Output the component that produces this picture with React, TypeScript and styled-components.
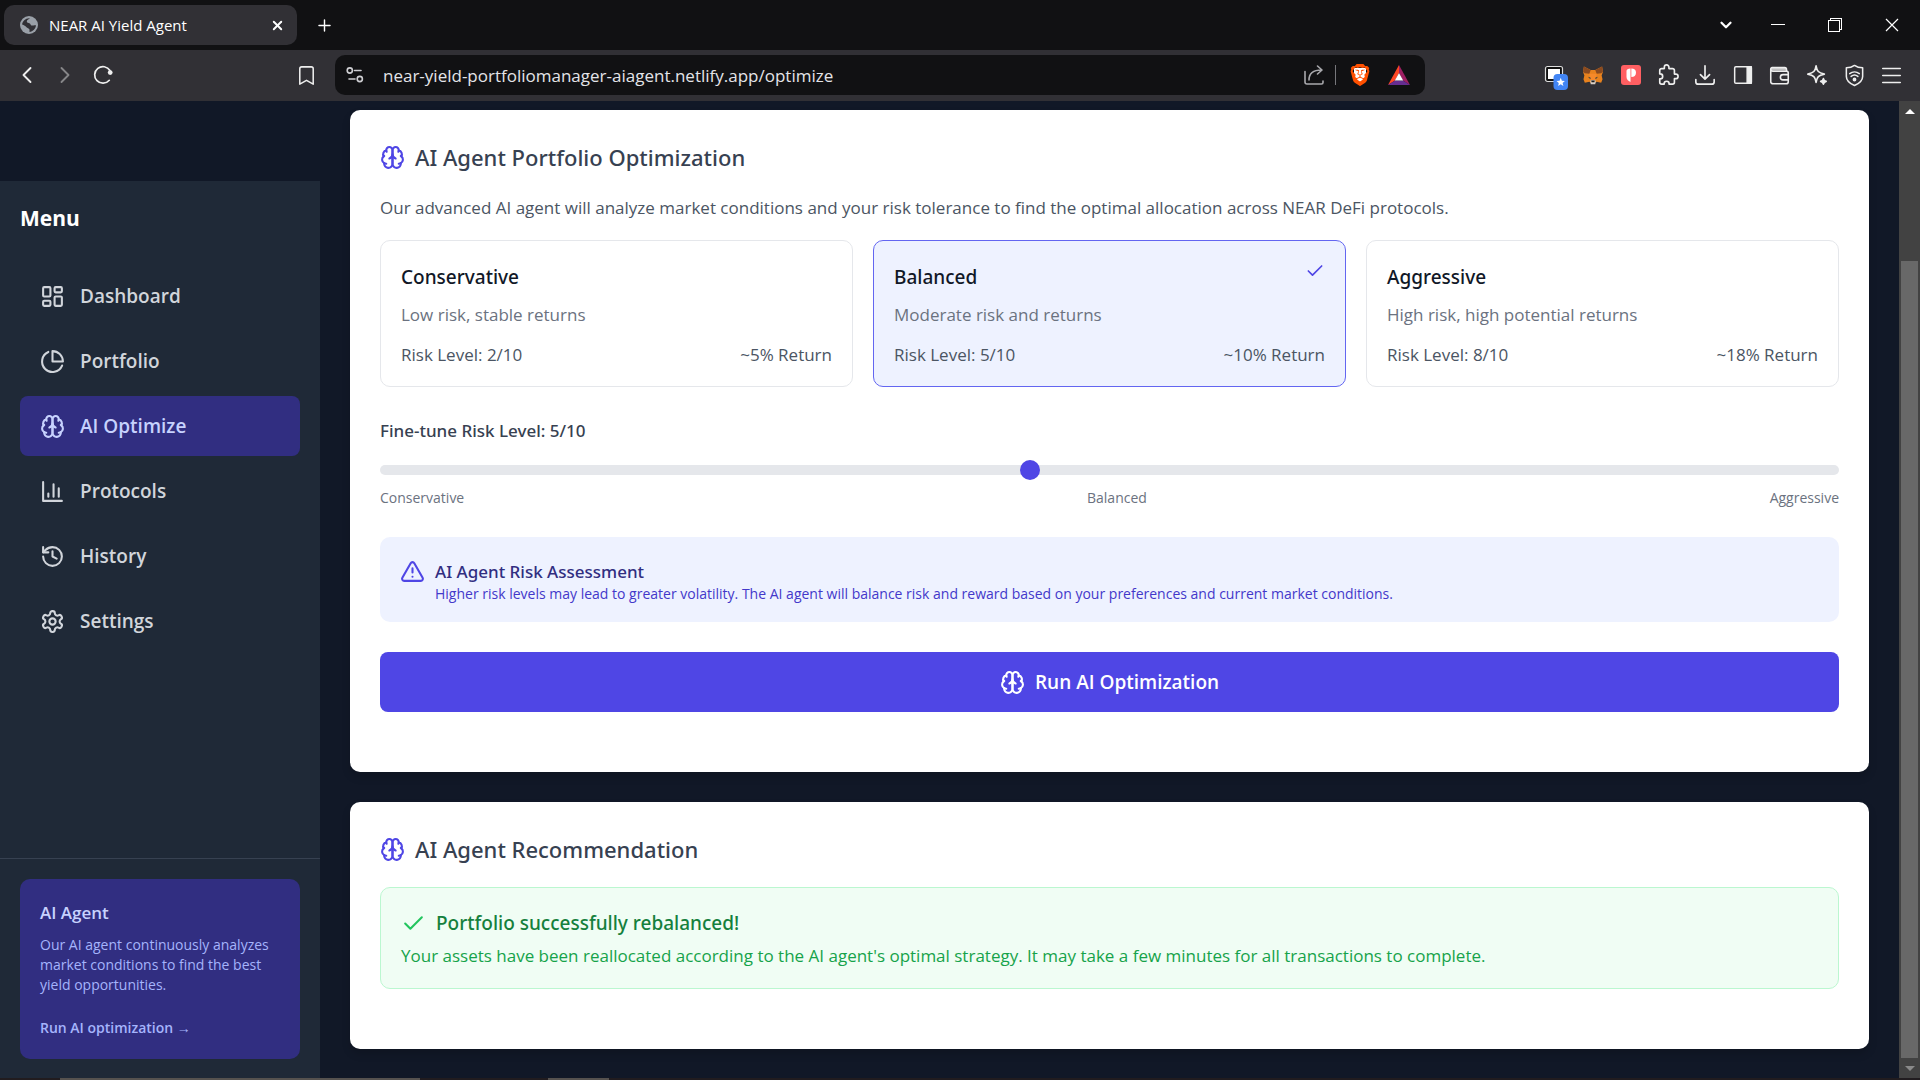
import React, { useState } from "react";
import styled, { createGlobalStyle, css } from "styled-components";
import {
  ChevronLeft, ChevronRight, ChevronDown, Bookmark, Plus, X,
  History, LayoutDashboard, Check,
} from "lucide-react";
import { SiBrave } from "react-icons/si";

const regular = `"Open Sans", "Noto Sans", sans-serif`;
const medium = `"Noto Sans", "Open Sans", sans-serif`;

const GlobalStyle = createGlobalStyle`
  *, *::before, *::after { box-sizing: border-box; }
  body { margin: 0; background: #111827; font-family: ${regular}; font-size: 17px; line-height: 25px; }
  h1, h2, h3, p, ul { margin: 0; padding: 0; }
  button { font: inherit; color: inherit; background: none; border: 0; padding: 0; cursor: pointer; }
  a { color: inherit; text-decoration: none; }
  svg { display: block; flex: none; }
`;

const mediumText = css`
  font-family: ${medium};
  font-weight: 500;
`;

/* ---------- browser frame ---------- */

const Window = styled.div`
  min-height: 100vh;
  display: flex;
  flex-direction: column;
`;

const TabStrip = styled.div`
  height: 50px;
  background: #111113;
  display: flex;
  align-items: center;
  padding-left: 4px;
  color: #fff;
`;

const Tab = styled.div`
  width: 293px;
  height: 40px;
  border-radius: 10px;
  background: #313035;
  display: flex;
  align-items: center;
  gap: 11px;
  padding: 0 12px 0 16px;
  font-size: 15px;
  line-height: 20px;
`;

const TabTitle = styled.span`
  flex: 1;
`;

const IconButton = styled.button<{ $w?: number; $dim?: boolean }>`
  width: ${(p) => p.$w ?? 26}px;
  height: 30px;
  display: flex;
  align-items: center;
  justify-content: center;
  opacity: ${(p) => (p.$dim ? 0.45 : 1)};
`;

const NewTab = styled(IconButton)`
  margin-left: 14px;
`;

const WindowControls = styled.div`
  margin-left: auto;
  display: flex;
`;

const Toolbar = styled.div`
  height: 51px;
  background: #313035;
  color: #eee;
  display: flex;
  align-items: center;
  padding: 0 16px 1px 0;
`;

const NavGroup = styled.div`
  flex: 0 0 335px;
  display: flex;
  gap: 12px;
  padding: 0 16px 0 14px;
`;

const BookmarkButton = styled(IconButton)`
  margin-left: auto;
`;

const AddressBar = styled.div`
  flex: 1;
  height: 40px;
  margin-right: 119px;
  border-radius: 10px;
  background: #111113;
  display: flex;
  align-items: center;
  padding-left: 7px;
`;

const Address = styled.input`
  flex: 1;
  min-width: 0;
  margin-left: 15px;
  padding: 0;
  border: 0;
  outline: 0;
  background: none;
  color: #e4e4e8;
  font: 400 17px ${regular};
`;

const AddressDivider = styled.span`
  width: 1px;
  height: 20px;
  margin: 0 11px 0 8px;
  background: #77777b;
`;

const BraveMark = styled.span`
  display: flex;
  color: #ff5000;
  background: linear-gradient(#fff, #fff) center / 12px 14px no-repeat;
`;

const Extensions = styled.div`
  width: 360px;
  display: flex;
  justify-content: space-between;
`;

const Viewport = styled.div`
  flex: 1;
  display: flex;
  align-items: stretch;
`;

const ScrollBar = styled.div`
  flex: 0 0 21px;
  display: flex;
  flex-direction: column;
  align-items: center;
  background: #424242;
`;

const ScrollArrow = styled.span<{ $down?: boolean }>`
  height: 20px;
  display: flex;
  align-items: center;
  color: ${(p) => (p.$down ? "#8a8a8a" : "#fff")};
`;

const ScrollThumb = styled.span`
  flex: 1;
  width: 17px;
  margin-top: 140px;
  background: #686868;
`;

const Taskbar = styled.div`
  height: 2px;
  display: flex;
  background: #211c1f;
`;

const TaskbarItem = styled.span<{ $start: number; $w: number }>`
  width: ${(p) => p.$w}px;
  margin-left: ${(p) => p.$start}px;
  background: #56524f;
`;

/* ---------- sidebar ---------- */

const Sidebar = styled.aside`
  flex: 0 0 320px;
  margin-top: 80px;
  background: #1f2937;
  display: flex;
  flex-direction: column;
`;

const SidebarTop = styled.div`
  flex: 1;
  padding: 20px;
`;

const MenuTitle = styled.h2`
  font-size: 21px;
  font-weight: 700;
  line-height: 35px;
  color: #fff;
`;

const NavList = styled.ul`
  list-style: none;
  margin-top: 30px;
  display: flex;
  flex-direction: column;
  gap: 5px;
`;

const NavLink = styled.a<{ $active?: boolean }>`
  height: 60px;
  padding: 0 20px;
  border-radius: 8px;
  display: flex;
  align-items: center;
  gap: 15px;
  font-size: 19px;
  font-weight: 600;
  color: ${(p) => (p.$active ? "#c7d2fe" : "#d1d5db")};
  background: ${(p) => (p.$active ? "#312e81" : "transparent")};
`;

const SidebarBottom = styled.div`
  border-top: 1px solid #374151;
  padding: 20px 20px 19px;
`;

const AgentCard = styled.section`
  padding: 21px 20px 19px;
  border-radius: 10px;
  background: #312e81;
  color: #a5b4fc;
`;

const AgentTitle = styled.h3`
  font-size: 17px;
  font-weight: 600;
  line-height: 25px;
  color: #c7d2fe;
`;

const AgentText = styled.p`
  margin-top: 10px;
  font-size: 14px;
  line-height: 20px;
`;

const AgentLink = styled.a`
  display: block;
  margin-top: 20px;
  font-size: 14px;
  font-weight: 600;
`;

/* ---------- page ---------- */

const Main = styled.main`
  flex: 1;
  min-width: 0;
  padding: 9px 30px 29px;
  display: flex;
  flex-direction: column;
  gap: 30px;
`;

const Card = styled.section`
  padding: 30px 30px 60px;
  border-radius: 10px;
  background: #fff;
  color: #4b5563;
  box-shadow: 0 5px 8px rgba(0, 0, 0, 0.15);
`;

const CardTitle = styled.h1`
  ${mediumText}
  display: flex;
  align-items: center;
  gap: 10px;
  margin-bottom: 20px;
  font-size: 22px;
  line-height: 35px;
  color: #374151;

  svg { color: #4f46e5; }
`;

const OptionGrid = styled.div`
  display: grid;
  grid-template-columns: repeat(3, 1fr);
  gap: 20px;
  margin-top: 20px;
`;

const Option = styled.button<{ $selected: boolean }>`
  position: relative;
  padding: 21px 20px 19px;
  border: 1px solid ${(p) => (p.$selected ? "#6366f1" : "#e5e7eb")};
  border-radius: 10px;
  background: ${(p) => (p.$selected ? "#eef2ff" : "#fff")};
  text-align: left;
`;

const OptionTitle = styled.span`
  ${mediumText}
  display: block;
  font-size: 19px;
  line-height: 30px;
  color: #111827;
`;

const OptionText = styled.span`
  display: block;
  margin: 10px 0 15px;
  color: #6b7280;
`;

const OptionFacts = styled.span`
  display: flex;
  justify-content: space-between;
`;

const OptionCheck = styled(Check)`
  position: absolute;
  top: 20px;
  right: 20px;
  color: #4f46e5;
`;

const SliderLabel = styled.label`
  ${mediumText}
  display: block;
  margin-top: 31px;
  font-size: 17px;
  color: #374151;
`;

const Slider = styled.input`
  appearance: none;
  display: block;
  width: 100%;
  height: 20px;
  margin: 17px 0 8px;
  background: transparent;

  &::-webkit-slider-runnable-track {
    height: 10px;
    border-radius: 5px;
    background: #e5e7eb;
  }
  &::-webkit-slider-thumb {
    appearance: none;
    width: 20px;
    height: 20px;
    margin-top: -5px;
    border-radius: 50%;
    background: #4f46e5;
  }
`;

const SliderScale = styled.div`
  display: flex;
  justify-content: space-between;
  font-size: 14px;
  line-height: 20px;
  color: #6b7280;
`;

const Notice = styled.div`
  display: flex;
  align-items: flex-start;
  gap: 10px;
  margin: 29px 0 30px;
  padding: 22px 20px 18px;
  border-radius: 10px;
  background: #eef2ff;
  color: #4f46e5;
`;

const NoticeTitle = styled.h3`
  ${mediumText}
  font-size: 17px;
  line-height: 25px;
  color: #312e81;
`;

const NoticeText = styled.p`
  font-size: 14px;
  line-height: 20px;
  color: #4338ca;
`;

const RunButton = styled.button`
  display: flex;
  align-items: center;
  justify-content: center;
  gap: 10px;
  width: 100%;
  height: 60px;
  border-radius: 8px;
  background: #4f46e5;
  color: #fff;
  font-size: 19px;
  font-weight: 600;
`;

const Success = styled.div`
  padding: 20px;
  border: 1px solid #bbf7d0;
  border-radius: 10px;
  background: #f0fdf4;
  color: #16a34a;
`;

const SuccessTitle = styled.h2`
  ${mediumText}
  display: flex;
  align-items: center;
  gap: 10px;
  margin-bottom: 5px;
  font-size: 19px;
  line-height: 30px;
  color: #15803d;

  svg { color: #22c55e; }
`;

/* ---------- drawings ---------- */

type IconProps = { size?: number; width?: number; children: React.ReactNode };

const Line = ({ size = 25, width = 2, children }: IconProps) => (
  <svg width={size} height={size} viewBox="0 0 24 24" fill="none" stroke="currentColor"
    strokeWidth={width} strokeLinecap="round" strokeLinejoin="round" aria-hidden="true">
    {children}
  </svg>
);

const Brain = () => (
  <Line>
    <path d="M12 5a3 3 0 1 0-5.997.125 4 4 0 0 0-2.526 5.77 4 4 0 0 0 .556 6.588A4 4 0 1 0 12 18Z" />
    <path d="M12 5a3 3 0 1 1 5.997.125 4 4 0 0 1 2.526 5.77 4 4 0 0 1-.556 6.588A4 4 0 1 1 12 18Z" />
    <path d="M15 13a4.5 4.5 0 0 1-3-4 4.5 4.5 0 0 1-3 4" />
    <path d="M17.599 6.5a3 3 0 0 0 .399-1.375M6.003 5.125A3 3 0 0 0 6.401 6.5M3.477 10.896a4 4 0 0 1 .585-.396M19.938 10.5a4 4 0 0 1 .585.396M6 18a4 4 0 0 1-1.967-.516M19.967 17.484A4 4 0 0 1 18 18" />
  </Line>
);

const Pie = () => (
  <Line>
    <path d="M21.21 15.89A10 10 0 1 1 8 2.83" />
    <path d="M22 12A10 10 0 0 0 12 2v10z" />
  </Line>
);

const Bars = () => (
  <Line>
    <path d="M3 3v18h18M18 17V9M13 17V5M8 17v-3" />
  </Line>
);

const Gear = () => (
  <Line>
    <path d="M12.22 2h-.44a2 2 0 0 0-2 2v.18a2 2 0 0 1-1 1.73l-.43.25a2 2 0 0 1-2 0l-.15-.08a2 2 0 0 0-2.73.73l-.22.38a2 2 0 0 0 .73 2.73l.15.1a2 2 0 0 1 1 1.72v.51a2 2 0 0 1-1 1.74l-.15.09a2 2 0 0 0-.73 2.73l.22.38a2 2 0 0 0 2.73.73l.15-.08a2 2 0 0 1 2 0l.43.25a2 2 0 0 1 1 1.73V20a2 2 0 0 0 2 2h.44a2 2 0 0 0 2-2v-.18a2 2 0 0 1 1-1.73l.43-.25a2 2 0 0 1 2 0l.15.08a2 2 0 0 0 2.73-.73l.22-.39a2 2 0 0 0-.73-2.73l-.15-.08a2 2 0 0 1-1-1.74v-.5a2 2 0 0 1 1-1.74l.15-.09a2 2 0 0 0 .73-2.73l-.22-.38a2 2 0 0 0-2.73-.73l-.15.08a2 2 0 0 1-2 0l-.43-.25a2 2 0 0 1-1-1.73V4a2 2 0 0 0-2-2z" />
    <circle cx="12" cy="12" r="3" />
  </Line>
);

const Warning = () => (
  <Line>
    <path d="m21.73 18-8-14a2 2 0 0 0-3.48 0l-8 14A2 2 0 0 0 4 21h16a2 2 0 0 0 1.73-3Z" />
    <path d="M12 9v4M12 17h.01" />
  </Line>
);

const Globe = () => (
  <svg width="18" height="18" viewBox="0 0 18 18" aria-hidden="true">
    <circle cx="9" cy="9" r="9" fill="#9aa0a8" />
    <path d="M10 2.2c-1.400 1-3.200 1.800-3.200 3.300 0 2 3.600 1 3.800 3 .1 1.400 1.600 1.100 2.900.9.900-.1 1.900-.4 2.500-.1-.3 3.500-3 6.400-6.500 6.600V13.700c-.100-1.400-1.700-1.500-2.700-2.300C5.600 10.400 4 9 2.100 8.600 2.400 5 5.800 1.700 10 2.200Z" fill="#313035" />
    <path d="M7.500 5.500c1.500-.6 3.600-.4 4.600.9" stroke="#9aa0a8" strokeWidth="1.500" fill="none" />
  </svg>
);

const Reload = () => (
  <svg width="20" height="20" viewBox="0 0 20 20" fill="none" stroke="currentColor" strokeWidth="1.700" strokeLinecap="round" aria-hidden="true">
    <path d="M16.300 15.300A8.300 8.300 0 1 1 17 5.500" />
    <circle cx="17.200" cy="7.600" r="2.400" fill="currentColor" stroke="none" />
  </svg>
);

const Tune = () => (
  <svg width="18" height="18" viewBox="0 0 18 18" fill="none" stroke="#cfcfd3" strokeWidth="1.600" strokeLinecap="round" aria-hidden="true">
    <circle cx="3.800" cy="4.500" r="2.600" /><path d="M8.500 4.500H15" />
    <circle cx="13.800" cy="13" r="2.600" /><path d="M3 13h6" />
  </svg>
);

const Share = () => (
  <svg width="22" height="22" viewBox="0 0 22 22" fill="none" stroke="#a9a9ad" strokeWidth="1.600" strokeLinecap="round" strokeLinejoin="round" aria-hidden="true">
    <path d="M2 7.500V18a2 2 0 0 0 2 2h14.500a1.500 1.500 0 0 0 1.500-1.500V17" />
    <path d="M6 16c0-6 3.500-10 12.500-10M14.500 2l4.500 4-4.500 4" />
  </svg>
);

const Bat = () => (
  <svg width="22" height="20" viewBox="0 0 22 20" aria-hidden="true">
    <path d="M11 0 0 20l7-4.500L11 8Z" fill="#ff4724" />
    <path d="M11 0l11 20-7-4.500L11 8Z" fill="#9e1f63" />
    <path d="M0 20h22l-7-4.500H7Z" fill="#662d91" />
    <path d="M11 8l4.200 7.600H6.800Z" fill="#fff" />
  </svg>
);

const StarredWindow = () => (
  <svg width="24" height="30" viewBox="0 0 24 30" aria-hidden="true">
    <rect x="1.500" y="6.500" width="17" height="15" rx="2" fill="#111" stroke="#ddd" strokeWidth="1.200" />
    <rect x="4" y="9" width="12" height="10" fill="#fff" />
    <rect x="9.500" y="14" width="14.500" height="16" rx="4" fill="#4285f4" />
    <path d="m16.700 17.800 1.200 2.900 3 .2-2.300 2 .8 3-2.700-1.700-2.600 1.700.7-3-2.300-2 3.100-.2Z" fill="#fff" />
  </svg>
);

const Fox = () => (
  <svg width="20" height="19" viewBox="0 0 22 20" aria-hidden="true">
    <path d="M1 0l7.500 4h5L21 0l1 6-1.500 4 1 4-1.500 4-5-1-2.500 2h-3L7 17l-5 1-1.500-4 1-4L0 6Z" fill="#e8821e" />
    <path d="M1 0l7.500 4L7 8 2 7.500 0 6ZM21 0l-7.500 4L15 8l5-.5 2-1.500Z" fill="#8a4a20" />
    <path d="M7 8h8l-1 7H8Z" fill="#f6892a" />
    <path d="M5.500 11.500l3 1-.5 1.500ZM16.500 11.500l-3 1 .5 1.500Z" fill="#2b3a45" />
    <path d="M8 16l1-1h4l1 1-.5 3.500h-5Z" fill="#d9cfc6" />
    <path d="M9 15.500h4l-.5 2h-3Z" fill="#1b1b1b" />
  </svg>
);

const RedBadge = () => (
  <svg width="20" height="20" viewBox="0 0 20 20" aria-hidden="true">
    <rect width="20" height="20" rx="3" fill="#ff5f62" />
    <path d="M9.500 3.500V17c-2.500-1.200-4-2.700-4-5V6C5.500 4.500 7 3.700 9.500 3.500Z" fill="#fff" />
    <path d="M10.300 3.500c3 0 4.700 1.400 4.700 4.200 0 2.700-1.700 4.300-4.700 4.300Z" fill="#fff" />
  </svg>
);

const PuzzlePiece = () => (
  <Line size={22} width={1.8}>
    <path d="M20.500 11H19V7c0-1.100-.9-2-2-2h-4V3.500a2.500 2.500 0 0 0-5 0V5H5c-1.100 0-2 .9-2 2v3.800h.5c1.490 0 2.700 1.210 2.700 2.700s-1.210 2.700-2.700 2.700H3V20c0 1.100.9 2 2 2h2.800v-.5c0-1.490 1.210-2.700 2.700-2.700s2.700 1.210 2.700 2.700v.5H17c1.100 0 2-.9 2-2v-4h1.500a2.500 2.500 0 0 0 0-5z" />
  </Line>
);

const Download = () => (
  <Line size={22} width={1.8}><path d="M12 2v14M7 11.500l5 5 5-5M2 17v2.500A2.500 2.500 0 0 0 4.500 22h15a2.500 2.500 0 0 0 2.500-2.500V17" /></Line>
);

const SidePanel = () => (
  <Line size={20} width={1.8}><rect x="2" y="2" width="20" height="20" rx="1.500" /><path d="M17 2h5v20h-5z" fill="currentColor" /></Line>
);

const WalletIcon = () => (
  <Line size={21} width={1.8}>
    <path d="M2 4.500A1.500 1.500 0 0 1 3.500 3H18a2 2 0 0 1 2 2v2M2 4.500V19a2.500 2.500 0 0 0 2.500 2.500h15A2.500 2.500 0 0 0 22 19V9a2 2 0 0 0-2-2H4.500A2.500 2.500 0 0 1 2 4.500ZM22 11h-6a3 3 0 0 0-3 3v0a3 3 0 0 0 3 3h6" />
    <path d="M3 4.500h16" />
  </Line>
);

const Sparkle = () => (
  <Line size={22} width={1.8}>
    <path d="M11 2c1 6 2.500 7.500 9 9-6.500 1.500-8 3-9 9-1-6-2.500-7.500-9-9 6.500-1.500 8-3 9-9Z" />
    <path d="M19 16c.4 2 1 2.600 3 3-2 .4-2.600 1-3 3-.4-2-1-2.600-3-3 2-.4 2.600-1 3-3Z" fill="currentColor" />
  </Line>
);

const VpnShield = () => (
  <Line size={23} width={1.6}>
    <path d="M12 1.500c2.500 1.800 5 2.500 8.500 2.500v9c0 4.500-4 7.500-8.500 9.500-4.500-2-8.500-5-8.500-9.500V4c3.500 0 6-.7 8.500-2.500Z" />
    <path d="M7 10a8 8 0 0 1 10 0M8.500 13a5.500 5.500 0 0 1 7 0" />
    <circle cx="12" cy="16.200" r="1.200" fill="currentColor" />
  </Line>
);

const Burger = () => (
  <Line size={21} width={1.8}><path d="M2 4h20M2 12h20M2 20h20" /></Line>
);

const Minimise = () => (
  <svg width="14" height="14" aria-hidden="true"><path d="M0 6h14v1H0z" fill="#fff" /></svg>
);

const Restore = () => (
  <svg width="14" height="14" fill="none" stroke="#fff" shapeRendering="crispEdges" aria-hidden="true">
    <path d="M0 2h11v11H0zM2 2V0h11v11h-2" transform="translate(0.500 0.500)" />
  </svg>
);

const Close = () => (
  <svg width="14" height="14" stroke="#fff" strokeWidth="1.200" aria-hidden="true"><path d="M1 1l12 12M13 1 1 13" /></svg>
);

const Triangle = ({ down }: { down?: boolean }) => (
  <svg width="10" height="5" aria-hidden="true"><path d={down ? "M0 0h10L5 5Z" : "M0 5h10L5 0Z"} fill="currentColor" /></svg>
);

/* ---------- data ---------- */

const navItems = [
  { label: "Dashboard", icon: <LayoutDashboard size={25} /> },
  { label: "Portfolio", icon: <Pie /> },
  { label: "AI Optimize", icon: <Brain />, active: true },
  { label: "Protocols", icon: <Bars /> },
  { label: "History", icon: <History size={25} /> },
  { label: "Settings", icon: <Gear /> },
];

const strategies = [
  { name: "Conservative", text: "Low risk, stable returns", risk: 2, yield: 5 },
  { name: "Balanced", text: "Moderate risk and returns", risk: 5, yield: 10 },
  { name: "Aggressive", text: "High risk, high potential returns", risk: 8, yield: 18 },
];

const extensions: [string, React.ReactNode][] = [
  ["Saved windows", <StarredWindow />],
  ["Fox wallet", <Fox />],
  ["P extension", <RedBadge />],
  ["Extensions", <PuzzlePiece />],
  ["Downloads", <Download />],
  ["Side panel", <SidePanel />],
  ["Wallet", <WalletIcon />],
  ["Assistant", <Sparkle />],
  ["VPN", <VpnShield />],
  ["Main menu", <Burger />],
];

export default function App() {
  const [risk, setRisk] = useState(5);

  return (
    <Window>
      <GlobalStyle />
      <TabStrip>
        <Tab>
          <Globe />
          <TabTitle>NEAR AI Yield Agent</TabTitle>
          <IconButton $w={16} aria-label="Close tab"><X size={15} strokeWidth={3} /></IconButton>
        </Tab>
        <NewTab aria-label="New tab"><Plus size={19} strokeWidth={1.8} /></NewTab>
        <WindowControls>
          <IconButton $w={46} aria-label="Search tabs"><ChevronDown size={18} strokeWidth={3} /></IconButton>
          <IconButton $w={57} aria-label="Minimise"><Minimise /></IconButton>
          <IconButton $w={57} aria-label="Restore"><Restore /></IconButton>
          <IconButton $w={57} aria-label="Close"><Close /></IconButton>
        </WindowControls>
      </TabStrip>

      <Toolbar>
        <NavGroup>
          <IconButton aria-label="Back"><ChevronLeft size={28} strokeWidth={1.6} /></IconButton>
          <IconButton aria-label="Forward" $dim><ChevronRight size={28} strokeWidth={1.6} /></IconButton>
          <IconButton aria-label="Reload"><Reload /></IconButton>
          <BookmarkButton aria-label="Bookmark"><Bookmark size={23} strokeWidth={1.6} /></BookmarkButton>
        </NavGroup>
        <AddressBar>
          <IconButton aria-label="Site settings"><Tune /></IconButton>
          <Address aria-label="Address" readOnly value="near-yield-portfoliomanager-aiagent.netlify.app/optimize" />
          <IconButton aria-label="Share"><Share /></IconButton>
          <AddressDivider />
          <IconButton aria-label="Brave Shields"><BraveMark><SiBrave size={22} /></BraveMark></IconButton>
          <IconButton aria-label="Brave Rewards" $w={52}><Bat /></IconButton>
        </AddressBar>
        <Extensions>
          {extensions.map(([label, icon]) => (
            <IconButton key={label} $w={24} aria-label={label}>{icon}</IconButton>
          ))}
        </Extensions>
      </Toolbar>

      <Viewport>
        <Sidebar>
          <SidebarTop>
            <MenuTitle>Menu</MenuTitle>
            <nav>
              <NavList>
                {navItems.map((item) => (
                  <li key={item.label}>
                    <NavLink href="#" $active={item.active}>{item.icon}{item.label}</NavLink>
                  </li>
                ))}
              </NavList>
            </nav>
          </SidebarTop>
          <SidebarBottom>
            <AgentCard>
              <AgentTitle>AI Agent</AgentTitle>
              <AgentText>Our AI agent continuously analyzes market conditions to find the best yield opportunities.</AgentText>
              <AgentLink href="#">Run AI optimization →</AgentLink>
            </AgentCard>
          </SidebarBottom>
        </Sidebar>

        <Main>
          <Card>
            <CardTitle><Brain />AI Agent Portfolio Optimization</CardTitle>
            <p>Our advanced AI agent will analyze market conditions and your risk tolerance to find the optimal allocation across NEAR DeFi protocols.</p>
            <OptionGrid>
              {strategies.map((s) => (
                <Option key={s.name} $selected={s.risk === risk} aria-pressed={s.risk === risk} onClick={() => setRisk(s.risk)}>
                  <OptionTitle>{s.name}</OptionTitle>
                  <OptionText>{s.text}</OptionText>
                  <OptionFacts>
                    <span>Risk Level: {s.risk}/10</span>
                    <span>~{s.yield}% Return</span>
                  </OptionFacts>
                  {s.risk === risk && <OptionCheck size={20} />}
                </Option>
              ))}
            </OptionGrid>
            <SliderLabel htmlFor="risk">Fine-tune Risk Level: {risk}/10</SliderLabel>
            <Slider id="risk" type="range" min={1} max={10} value={risk} onChange={(e) => setRisk(Number(e.target.value))} />
            <SliderScale><span>Conservative</span><span>Balanced</span><span>Aggressive</span></SliderScale>
            <Notice>
              <Warning />
              <div>
                <NoticeTitle>AI Agent Risk Assessment</NoticeTitle>
                <NoticeText>Higher risk levels may lead to greater volatility. The AI agent will balance risk and reward based on your preferences and current market conditions.</NoticeText>
              </div>
            </Notice>
            <RunButton><Brain />Run AI Optimization</RunButton>
          </Card>

          <Card>
            <CardTitle as="h2"><Brain />AI Agent Recommendation</CardTitle>
            <Success>
              <SuccessTitle as="h3"><Check size={25} />Portfolio successfully rebalanced!</SuccessTitle>
              <p>Your assets have been reallocated according to the AI agent's optimal strategy. It may take a few minutes for all transactions to complete.</p>
            </Success>
          </Card>
        </Main>

        <ScrollBar aria-hidden="true">
          <ScrollArrow><Triangle /></ScrollArrow>
          <ScrollThumb />
          <ScrollArrow $down><Triangle down /></ScrollArrow>
        </ScrollBar>
      </Viewport>

      <Taskbar aria-hidden="true">
        <TaskbarItem $start={60} $w={360} />
        <TaskbarItem $start={128} $w={61} />
      </Taskbar>
    </Window>
  );
}
